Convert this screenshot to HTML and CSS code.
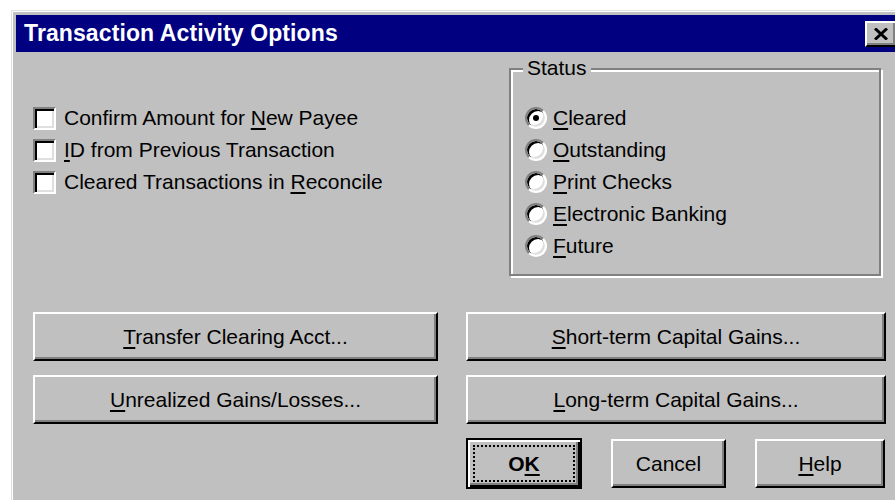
FILE: index.html
```html
<!DOCTYPE html>
<html lang="en">
<head>
<meta charset="utf-8">
<title>Transaction Activity Options</title>
<link rel="stylesheet" href="styles.css">
</head>
<body>
<div class="window">
  <div class="titlebar">
    <span class="title">Transaction Activity Options</span>
    <button class="close" type="button" aria-label="Close">
      <svg width="14" height="12" viewBox="0 0 14 12"><path d="M1 0.5 L13 11.5 M13 0.5 L1 11.5" stroke="#000" stroke-width="3" fill="none"/></svg>
    </button>
  </div>
  <div class="content">
    <div class="top">
      <div class="checks">
        <label class="check"><span class="box"></span><span>Confirm Amount for <u>N</u>ew Payee</span></label>
        <label class="check"><span class="box"></span><span><u>I</u>D from Previous Transaction</span></label>
        <label class="check"><span class="box"></span><span>Cleared Transactions in <u>R</u>econcile</span></label>
      </div>
      <div class="group">
        <div class="legend">Status</div>
        <div class="radios">
          <div class="opt"><span class="radio on"></span><span><u>C</u>leared</span></div>
          <div class="opt"><span class="radio"></span><span><u>O</u>utstanding</span></div>
          <div class="opt"><span class="radio"></span><span><u>P</u>rint Checks</span></div>
          <div class="opt"><span class="radio"></span><span><u>E</u>lectronic Banking</span></div>
          <div class="opt"><span class="radio"></span><span><u>F</u>uture</span></div>
        </div>
      </div>
    </div>
    <div class="actions">
      <button class="btn" type="button"><u>T</u>ransfer Clearing Acct...</button>
      <button class="btn" type="button"><u>S</u>hort-term Capital Gains...</button>
      <button class="btn" type="button"><u>U</u>nrealized Gains/Losses...</button>
      <button class="btn" type="button"><u>L</u>ong-term Capital Gains...</button>
    </div>
    <div class="footer">
      <button class="btn ok" type="button"><span class="focus">O<u>K</u></span></button>
      <button class="btn cancel" type="button">Cancel</button>
      <button class="btn help" type="button"><u>H</u>elp</button>
    </div>
  </div>
</div>
</body>
</html>
```
FILE: styles.css
```css
html, body {
  margin: 0;
  background: #fff;
  overflow: hidden;
}

body {
  font-family: "Liberation Sans", Arial, sans-serif;
  font-size: 21px;
  color: #000;
}

u {
  text-decoration-thickness: 2px;
  text-underline-offset: 3px;
}

/* dialog frame */
.window {
  margin: 10px 0 0 11px;
  width: 885px;
  height: 600px;
  padding: 4px;
  border: 1px solid;
  border-color: #dfdfdf #000 #000 #dfdfdf;
  box-shadow: inset 1px 1px #fff;
  background: #c0c0c0;
}

.titlebar {
  height: 37px;
  background: #000080;
  display: flex;
  align-items: center;
  justify-content: space-between;
  padding: 0 4px 0 8px;
}

.title {
  color: #fff;
  font-weight: bold;
  font-size: 23px;
  letter-spacing: 0.1px;
}

.close {
  width: 32px;
  height: 26px;
  padding: 0;
  margin: 0;
  display: flex;
  align-items: center;
  justify-content: center;
  background: #c0c0c0;
  border: 2px solid;
  border-color: #fff #000 #000 #fff;
  box-shadow: inset -2px -2px #808080;
}

/* options + status group */
.top {
  display: grid;
  grid-template-columns: 476px 372px;
  padding: 0 20px 0 17px;
}

.checks {
  padding-top: 50px;
}

.check,
.opt {
  display: flex;
  align-items: center;
  height: 32px;
  white-space: nowrap;
}

.box {
  width: 23px;
  height: 23px;
  box-sizing: border-box;
  margin-right: 8px;
  background: #fff;
  border: 2px solid;
  border-color: #808080 #fff #fff #808080;
  box-shadow: inset 2px 2px #000, inset -2px -2px #dfdfdf;
  flex: none;
}

.group {
  margin-top: 16px;
  height: 208px;
  box-sizing: border-box;
  border: 2px solid #808080;
  box-shadow: inset 2px 2px #fff, 2px 2px #fff;
}

.legend {
  display: table;
  margin: -13px 0 0 12px;
  padding: 0 4px;
  line-height: 22px;
  background: #c0c0c0;
}

.radios {
  padding: 23px 0 0 14px;
}

.radio {
  width: 22px;
  height: 22px;
  box-sizing: border-box;
  margin-right: 6px;
  border-radius: 50%;
  background: #fff;
  border: 2px solid;
  border-color: #808080 #fff #fff #808080;
  box-shadow: inset 2px 2px #000, inset -2px -2px #dfdfdf;
  display: flex;
  align-items: center;
  justify-content: center;
  flex: none;
}

.radio.on::after {
  content: "";
  width: 6px;
  height: 6px;
  border-radius: 50%;
  background: #000;
}

/* push buttons */
.btn {
  font: inherit;
  color: #000;
  margin: 0;
  padding: 0;
  height: 49px;
  background: #c0c0c0;
  border: 2px solid;
  border-color: #fff #000 #000 #fff;
  box-shadow: inset -2px -2px #808080;
  white-space: nowrap;
}

.actions {
  display: grid;
  grid-template-columns: 405px 420px;
  column-gap: 28px;
  row-gap: 14px;
  margin-top: 36px;
  padding-left: 17px;
}

.footer {
  display: flex;
  align-items: center;
  gap: 29px;
  margin-top: 14px;
  padding-left: 450px;
}

.ok {
  width: 116px;
  height: 51px;
  padding: 5px;
  border-color: #000;
  font-weight: bold;
  box-shadow: inset 2px 2px #fff, inset -2px -2px #000, inset -4px -4px #808080;
}

.focus {
  display: flex;
  align-items: center;
  justify-content: center;
  width: 100%;
  height: 100%;
  box-sizing: border-box;
  border: 2px dotted #000;
}

.cancel {
  width: 115px;
}

.help {
  width: 130px;
}
```
